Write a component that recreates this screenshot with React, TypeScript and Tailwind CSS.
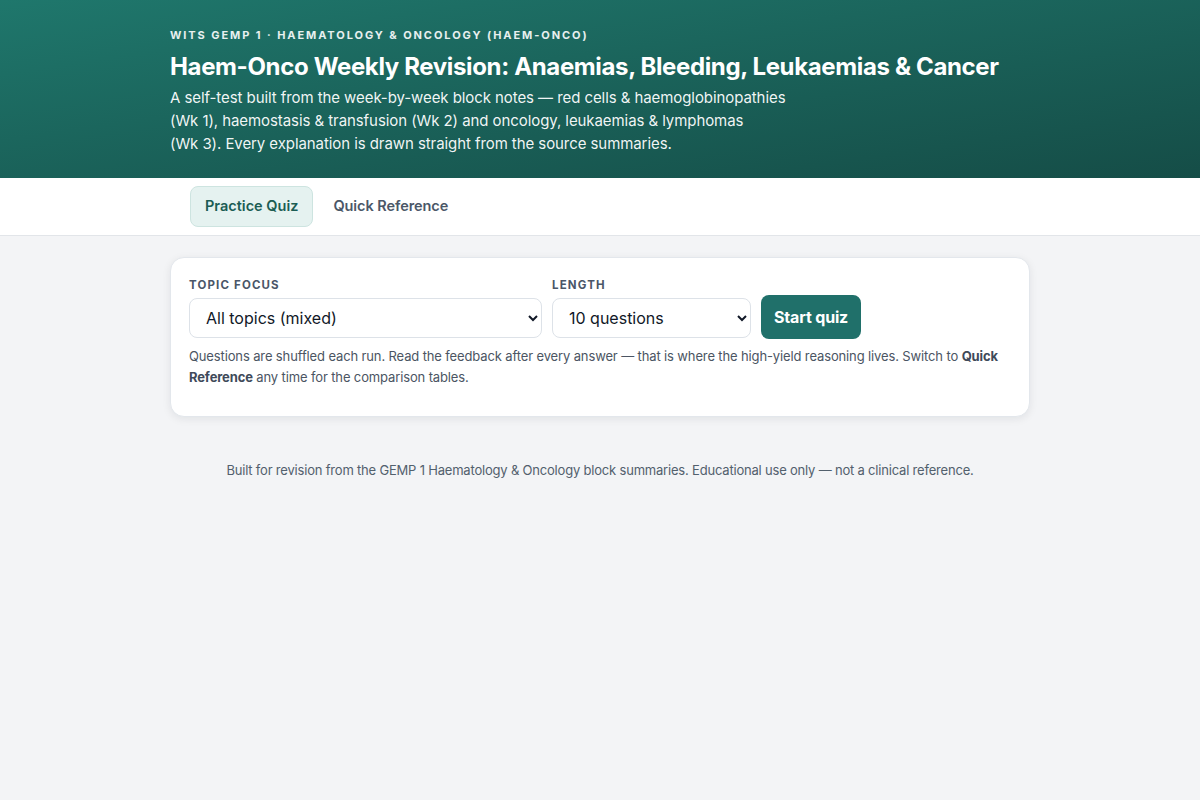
import { useState } from "react";

const topics = [
  "All topics (mixed)",
  "Week 1: Red cells & haemoglobinopathies",
  "Week 2: Haemostasis & transfusion",
  "Week 3: Oncology, leukaemias & lymphomas",
];

const lengths = ["5 questions", "10 questions", "20 questions", "All questions"];

const App = () => {
  const [tab, setTab] = useState<"quiz" | "ref">("quiz");
  const [topic, setTopic] = useState(topics[0]);
  const [length, setLength] = useState(lengths[1]);

  return (
    <div className="min-h-screen bg-[#f3f4f6] font-['Inter','Liberation_Sans',sans-serif] text-[#1f2937]">
      {/* Header */}
      <header className="bg-gradient-to-br from-[#1f776c] to-[#154d47] text-white">
        <div className="mx-auto max-w-[860px] pt-[27px] pb-[23px]">
          <div className="text-[11px] font-bold uppercase tracking-[0.175em] text-white/90">
            Wits GEMP 1 · Haematology &amp; Oncology (Haem-Onco)
          </div>
          <h1 className="mt-[7px] text-[24px] font-bold leading-[32px] tracking-[-0.015em]">
            Haem-Onco Weekly Revision: Anaemias, Bleeding, Leukaemias &amp; Cancer
          </h1>
          <p className="mt-[3px] max-w-[620px] text-[15px] leading-[23px] tracking-[-0.005em] text-white/95">
            A self-test built from the week-by-week block notes — red cells &amp; haemoglobinopathies
            (Wk&nbsp;1), haemostasis &amp; transfusion (Wk&nbsp;2) and oncology, leukaemias &amp; lymphomas
            (Wk&nbsp;3). Every explanation is drawn straight from the source summaries.
          </p>
        </div>
      </header>

      {/* Tabs */}
      <nav className="border-b border-[#e2e5e9] bg-white">
        <div className="mx-auto flex max-w-[860px] gap-[1px] px-[20px] py-[8px]">
          <button
            onClick={() => setTab("quiz")}
            className={`h-[41px] rounded-lg border px-[14px] text-[14.5px] font-semibold ${
              tab === "quiz"
                ? "border-[#cde4e0] bg-[#e5f2f0] text-[#1b5d54]"
                : "border-transparent text-[#4b5768]"
            }`}
          >
            Practice Quiz
          </button>
          <button
            onClick={() => setTab("ref")}
            className={`h-[41px] rounded-lg border px-[18px] text-[14.5px] font-semibold tracking-[-0.005em] ${
              tab === "ref"
                ? "border-[#cde4e0] bg-[#e5f2f0] text-[#1b5d54]"
                : "border-transparent text-[#4b5768]"
            }`}
          >
            Quick Reference
          </button>
        </div>
      </nav>

      {/* Setup card */}
      <main className="mx-auto max-w-[860px] pt-[21px]">
        <section className="rounded-[14px] border border-[#e3e7ec] bg-white px-[18px] pt-[19px] pb-[28px] shadow-[0_2px_8px_rgba(15,23,42,0.08)]">
          <div className="flex items-end gap-[10px]">
            <label className="flex w-[353px] flex-col">
              <span className="mb-[4px] text-[11.5px] font-bold uppercase tracking-[0.1em] text-[#4a5668]">
                Topic focus
              </span>
              <select
                value={topic}
                onChange={(e) => setTopic(e.target.value)}
                className="h-[40px] rounded-lg border border-[#dde2e8] bg-white px-[12px] text-[16px] text-[#111827]"
              >
                {topics.map((t) => (
                  <option key={t}>{t}</option>
                ))}
              </select>
            </label>
            <label className="flex w-[199px] flex-col">
              <span className="mb-[4px] text-[11.5px] font-bold uppercase tracking-[0.1em] text-[#4a5668]">
                Length
              </span>
              <select
                value={length}
                onChange={(e) => setLength(e.target.value)}
                className="h-[40px] rounded-lg border border-[#dde2e8] bg-white px-[12px] text-[16px] text-[#111827]"
              >
                {lengths.map((l) => (
                  <option key={l}>{l}</option>
                ))}
              </select>
            </label>
            <button className="mb-[-1px] h-[44px] rounded-lg bg-[#20706a] px-[13px] text-[16px] font-bold tracking-[-0.01em] text-white">
              Start quiz
            </button>
          </div>
          <p className="mt-[8px] text-[13px] leading-[21px] tracking-[-0.01em] text-[#4b5563]">
            Questions are shuffled each run. Read the feedback after every answer — that is where
            the high-yield reasoning lives. Switch to <strong className="text-[#3f4a5a]">Quick</strong>{" "}
            <strong className="text-[#3f4a5a]">Reference</strong> any time for the comparison tables.
          </p>
        </section>

        <footer className="mt-[44px] text-center text-[13px] tracking-[-0.015em] text-[#52606d]">
          Built for revision from the GEMP 1 Haematology &amp; Oncology block summaries. Educational
          use only — not a clinical reference.
        </footer>
      </main>
    </div>
  );
};

export default App;
